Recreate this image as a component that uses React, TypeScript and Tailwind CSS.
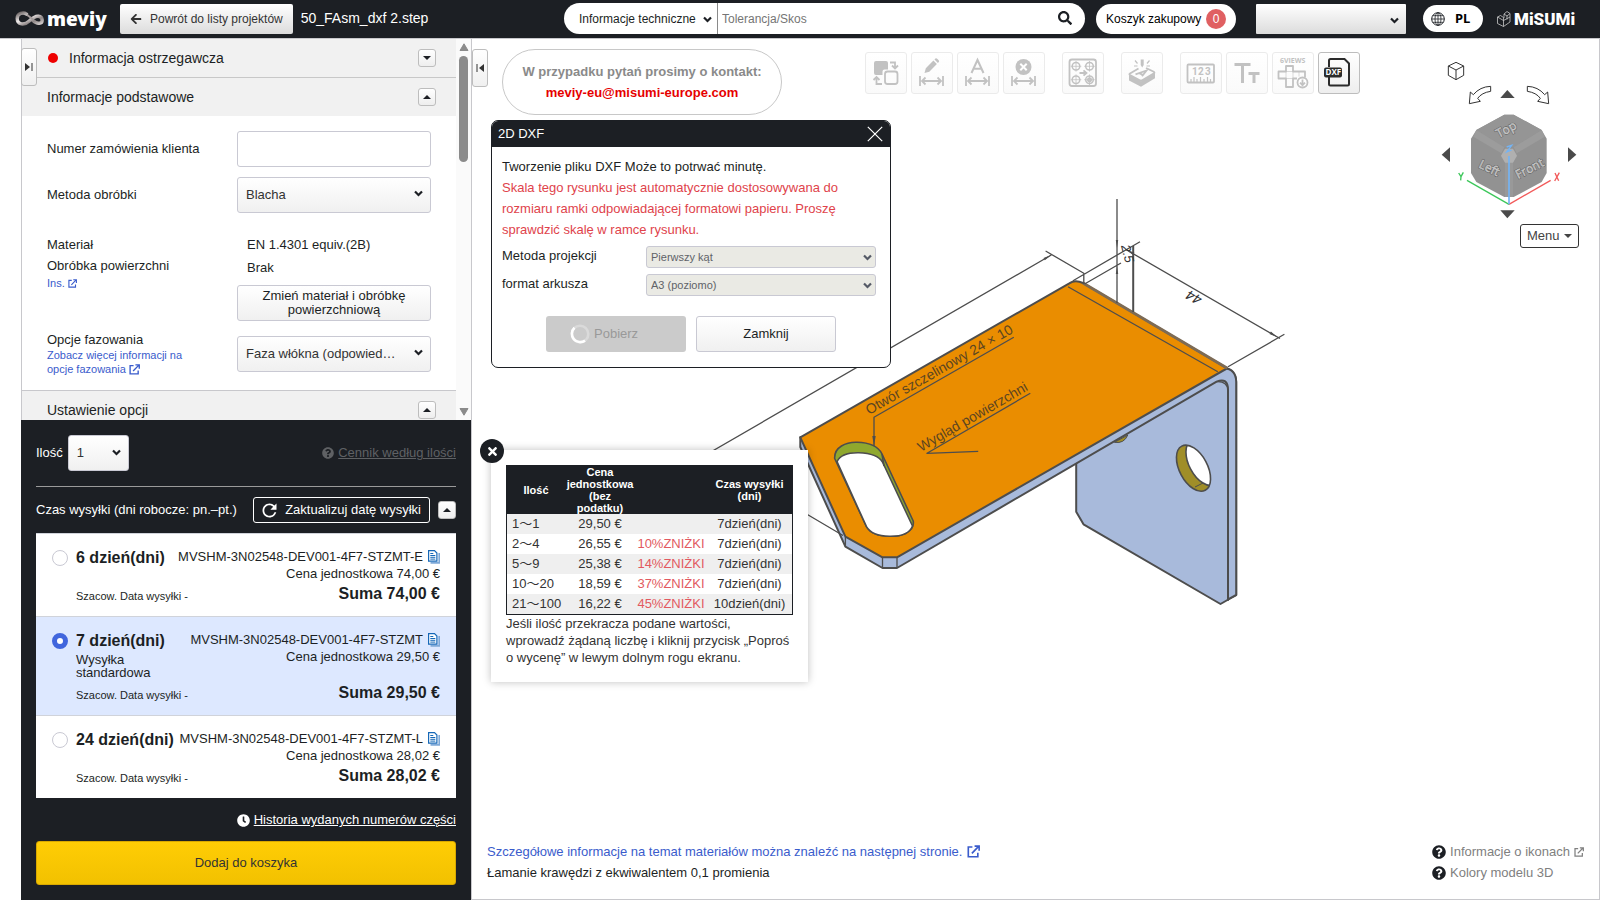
import type { ReactNode } from 'react';
import { FaArrowLeft, FaSearch, FaQuestionCircle, FaClock, FaTimes } from 'react-icons/fa';
import { MdRefresh } from 'react-icons/md';

const FIELD = 'rounded-[3px] border border-[#c9c9d3] bg-linear-to-b from-white to-[#f0f0f0]';

function Chevron({ className }: { className: string }) {
  return (
    <svg viewBox="0 0 9 7" className={`pointer-events-none absolute h-[7px] w-[9px] ${className}`} aria-hidden="true">
      <path d="M1 1.500 4.500 5 8 1.500" fill="none" stroke="currentColor" strokeWidth="2.200" />
    </svg>
  );
}

function ExternalIcon({ className }: { className: string }) {
  return (
    <svg viewBox="0 0 12 12" className={className} fill="none" stroke="currentColor" strokeWidth="1.500" aria-hidden="true">
      <path d="M5 1.800H1.200v9H10V7.200M4.500 7.700 10.500 1.500M7 1h4.200v4.200" />
    </svg>
  );
}

function Triangle({ up = false }: { up?: boolean }) {
  return (
    <svg viewBox="0 0 8 4" className="h-[4px] w-[8px]" aria-hidden="true">
      <path d={up ? 'M0 4 4 0 8 4z' : 'M0 0 4 4 8 0z'} fill="currentColor" />
    </svg>
  );
}

function Toggle({ up = false, label }: { up?: boolean; label: string }) {
  return (
    <button aria-label={label} className="flex h-[18px] w-[18px] items-center justify-center rounded-[3px] border border-[#bdbdbd] bg-linear-to-b from-white to-[#eeeeee] text-[#1c1f24]">
      <Triangle up={up} />
    </button>
  );
}

function MeviyLogo() {
  return (
    <a href="#home" aria-label="meviy" className="flex w-[91px] items-center text-white">
      <svg viewBox="0 0 30 16" className="h-[16px] w-[30px] shrink-0" aria-hidden="true">
        <defs>
          <linearGradient id="loop" x1="0" y1="0" x2="1" y2="1">
            <stop offset="0" stopColor="#6d6666" />
            <stop offset=".4" stopColor="#f1ecec" />
            <stop offset=".7" stopColor="#8c8484" />
            <stop offset="1" stopColor="#d8d2d2" />
          </linearGradient>
        </defs>
        <path d="M11.500 3.200C8.500 1 2.200 2 2.200 7.500c0 6.500 7.300 7 11.800 2.800C17.500 7 20 4.800 23.500 5.300c4.500.6 5 6.600.6 7-3 .3-4.800-1.500-6.600-3.300" fill="none" stroke="url(#loop)" strokeWidth="3.400" strokeLinecap="round" />
        <path d="M12.500 4.200 17.500 8" fill="none" stroke="#a39b9b" strokeWidth="2" strokeLinecap="round" />
      </svg>
      <span className="ml-[2px] font-['Noto_Sans',sans-serif] text-[19px] leading-[24px] font-black">meviy</span>
    </a>
  );
}

function Header() {
  return (
    <header className="flex h-[39px] shrink-0 items-start border-b border-[#c8c8cc] bg-[#1c1f24] pt-[3px]">
      <div className="flex h-[31px] items-center pl-[15px]">
        <MeviyLogo />
        <button className="ml-[14px] flex h-[30px] items-center gap-[8px] rounded-[2px] bg-linear-to-b from-white to-[#dcdcdc] px-[10px] text-[12px] whitespace-nowrap text-[#333]">
          <FaArrowLeft className="h-[12px] w-[12px]" />
          Powrót do listy projektów
        </button>
        <span className="ml-[8px] text-[14px] whitespace-nowrap text-white">50_FAsm_dxf 2.step</span>
      </div>
      <div className="ml-auto flex h-[31px] items-center pr-[28px]">
        <div className="flex h-[31px] w-[521px] overflow-hidden rounded-full bg-white">
          <div className="relative w-[154px] shrink-0 border-r border-[#8a8a8a]">
            <select aria-label="Zakres wyszukiwania" className="h-full w-full appearance-none pl-[15px] text-[12px] text-[#1c1f24]">
              <option>Informacje techniczne</option>
            </select>
            <Chevron className="top-[13px] right-[5px]" />
          </div>
          <input aria-label="Szukaj" placeholder="Tolerancja/Skos" className="min-w-0 flex-1 pl-[4px] text-[12px] outline-none placeholder:text-[#757575]" />
          <button aria-label="Szukaj" className="mr-[13px] pb-[2px] text-[#1c1f24]">
            <FaSearch className="h-[14px] w-[14px]" />
          </button>
        </div>
        <button className="ml-[11px] flex h-[30px] w-[140px] items-center justify-between rounded-full bg-white pr-[10px] pl-[10px] text-[12px] text-black">
          Koszyk zakupowy
          <span className="flex h-[20px] w-[20px] items-center justify-center rounded-full bg-[#e06062] text-white">0</span>
        </button>
        <div className="relative ml-[20px]">
          <select aria-label="Konto" className="h-[30px] w-[150px] appearance-none rounded-[1px] bg-linear-to-b from-white to-[#dcdcdc]">
            <option></option>
          </select>
          <Chevron className="top-[13px] right-[7px]" />
        </div>
        <button className="ml-[17px] flex h-[27px] w-[60px] items-center rounded-full bg-white pl-[8px] font-['Noto_Sans',sans-serif] text-[13px] font-bold text-black">
          <svg viewBox="0 0 14 14" className="mr-[10px] h-[14px] w-[14px]" fill="none" stroke="#1c1f24" aria-hidden="true">
            <circle cx="7" cy="7" r="6.300" />
            <ellipse cx="7" cy="7" rx="3" ry="6.300" strokeWidth=".8" />
            <path d="M7 .7v12.600M.7 7h12.600M1.700 3.700h10.600M1.700 10.300h10.600" strokeWidth=".8" />
          </svg>
          PL
        </button>
        <a href="#misumi" aria-label="MiSUMi" className="ml-[14px] flex w-[75px] items-center text-white">
          <svg viewBox="0 0 14 16" className="mr-[3px] h-[16px] w-[14px] shrink-0" fill="none" stroke="#c9c9c9" strokeWidth=".8" aria-hidden="true">
            <path d="M.5 6 3.500 4.500 6.500 6.500 6.500 15.500 .5 12.500zM.5 6 6.500 9.500M7 3 10 .5 13 2.500 13 11 6.500 15.500M7 3v4M7 3 10 5 13 2.500M10 5v3.500M6.500 9.500 13 6" />
          </svg>
          <span className="font-['Roboto',sans-serif] text-[17px] leading-[24px] font-black">MiSUMi</span>
        </a>
      </div>
    </header>
  );
}

function SelectField({ id, value }: { id: string; value: string }) {
  return (
    <div className="relative text-[#1c1f24]">
      <select id={id} className={`h-[36px] w-full appearance-none pl-[8px] text-[13px] text-[#333] ${FIELD}`}>
        <option>{value}</option>
      </select>
      <Chevron className="top-[13px] right-[8px]" />
    </div>
  );
}

function BasicForm() {
  return (
    <div className="px-[25px] pt-[15px] pb-[14px] text-[13px]">
      <div className="grid grid-cols-[1fr_194px] items-center gap-y-[10px]">
        <label htmlFor="order">Numer zamówienia klienta</label>
        <input id="order" className="h-[36px] rounded-[3px] border border-[#c9c9d3] px-2" />
        <label htmlFor="method">Metoda obróbki</label>
        <SelectField id="method" value="Blacha" />
      </div>
      <div className="mt-[20px] grid grid-cols-[1fr_194px]">
        <div className="pt-[1px] leading-[21px]">
          <div>Materiał</div>
          <div>Obróbka powierzchni</div>
          <a href="#ins" className="flex items-center gap-[3px] text-[11px] leading-[14px] text-[#3a5ccc]">
            Ins. <ExternalIcon className="h-[9px] w-[9px]" />
          </a>
        </div>
        <div>
          <div className="pl-[10px] leading-[23px]">
            <div>EN 1.4301 equiv.(2B)</div>
            <div>Brak</div>
          </div>
          <button className={`mt-[6px] h-[36px] w-full px-[20px] leading-[14px] ${FIELD}`}>Zmień materiał i obróbkę powierzchniową</button>
        </div>
      </div>
      <div className="mt-[11px] grid grid-cols-[1fr_194px]">
        <div>
          <label htmlFor="chamfer" className="block leading-[16px]">Opcje fazowania</label>
          <a href="#chamfer" className="block text-[11px] leading-[14px] text-[#3a5ccc]">
            Zobacz więcej informacji na
            <span className="flex items-center gap-[3px]">opcje fazowania <ExternalIcon className="h-[11px] w-[11px]" /></span>
          </a>
        </div>
        <div className="pt-[4px]">
          <SelectField id="chamfer" value="Faza włókna (odpowied…" />
        </div>
      </div>
    </div>
  );
}

type Option = { days: string; note?: boolean; part: string; price: string; checked?: boolean };
const OPTIONS: Option[] = [
  { days: '6', part: 'MVSHM-3N02548-DEV001-4F7-STZMT-E', price: '74,00' },
  { days: '7', part: 'MVSHM-3N02548-DEV001-4F7-STZMT', price: '29,50', note: true, checked: true },
  { days: '24', part: 'MVSHM-3N02548-DEV001-4F7-STZMT-L', price: '28,02' },
];

function CopyIcon() {
  return (
    <svg viewBox="0 0 12 14" className="h-[14px] w-[12px]" aria-hidden="true">
      <path d="M11.200 3v9.900H2.500" fill="none" stroke="#7fa9d8" strokeWidth="1.600" />
      <path d="M.6.6h5.900l2.400 2.400v8.100H.6z" fill="#fff" stroke="#1668b8" strokeWidth="1.200" />
      <path d="M2.300 3.500h3M2.300 5.500h5M2.300 7.300h5M2.300 9.100h5" stroke="#1668b8" />
    </svg>
  );
}

function DeliveryOption({ o }: { o: Option }) {
  return (
    <li className={`border-t border-[#d0d3da] ${o.checked ? 'bg-[#dde8ff]' : 'bg-white'}`}>
      <label className="flex px-[16px] pt-[14px] pb-[12px]">
        <input type="radio" name="delivery" defaultChecked={o.checked} className="mt-[2px] h-[16px] w-[16px] shrink-0 appearance-none rounded-full border border-[#c9c9d3] bg-white checked:border-[5px] checked:border-[#4166dd]" />
        <span className="ml-[8px] flex w-[98px] shrink-0 flex-col whitespace-nowrap">
          <span className="text-[16px] leading-[20px] font-bold">{o.days} dzień(dni)</span>
          {o.note && <span className="mt-[2px] mb-[9px] text-[13px] leading-[13px]">Wysyłka<br />standardowa</span>}
          <span className="mt-auto mb-[1px] text-[11px] leading-[14px]">Szacow. Data wysyłki -</span>
        </span>
        <span className="ml-auto flex flex-col items-end text-[13px] leading-[17px] whitespace-nowrap">
          <span className="flex items-center gap-[5px]">{o.part}<CopyIcon /></span>
          <span>Cena jednostkowa {o.price} €</span>
          <span className="mt-auto pt-[2px] text-[16px] leading-[20px] font-bold">Suma {o.price} €</span>
        </span>
      </label>
    </li>
  );
}

function OrderPanel() {
  return (
    <section className="shrink-0 bg-[#1c1f24] px-[15px] py-[15px] text-[13px] text-white">
      <div className="flex items-center">
        <label htmlFor="qty">Ilość</label>
        <div className="relative ml-[5px] w-[61px] text-[#1c1f24]">
          <select id="qty" className={`h-[36px] w-full appearance-none pl-[8px] text-[#333] ${FIELD}`}>
            <option>1</option>
          </select>
          <Chevron className="top-[14px] right-[8px]" />
        </div>
        <a href="#pricing" className="ml-auto flex items-center gap-[4px] text-[#5f6164]">
          <FaQuestionCircle className="h-[12px] w-[12px]" />
          <span className="underline">Cennik według ilości</span>
        </a>
      </div>
      <hr className="mt-[15px] border-[#9a9a9a]" />
      <div className="mt-[10px] flex items-center">
        <span className="whitespace-nowrap">Czas wysyłki (dni robocze: pn.–pt.)</span>
        <button className="ml-auto flex h-[26px] items-center gap-[5px] rounded-[3px] border border-white pr-[8px] pl-[5px] whitespace-nowrap">
          <MdRefresh className="h-[21px] w-[21px]" stroke="currentColor" />
          Zaktualizuj datę wysyłki
        </button>
        <div className="ml-[8px]"><Toggle up label="Zwiń czas wysyłki" /></div>
      </div>
      <ul className="mt-[10px] text-[#1c1f24]">
        {OPTIONS.map((o) => <DeliveryOption key={o.days} o={o} />)}
      </ul>
      <a href="#history" className="mt-[12px] flex items-center justify-end gap-[4px] leading-[20px]">
        <FaClock className="h-[13px] w-[13px]" />
        <span className="underline">Historia wydanych numerów części</span>
      </a>
      <button className="mt-[11px] h-[44px] w-full rounded-[3px] border border-[#d9a800] bg-linear-to-b from-[#ffcd05] to-[#f2c100] text-[#333]">Dodaj do koszyka</button>
    </section>
  );
}

function Sidebar() {
  return (
    <aside className="relative ml-[21px] flex w-[451px] shrink-0 flex-col border-r border-[#c8c8cc]">
      <div className="flex min-h-0 flex-1 border-l border-[#c8c8cc]">
        <div className="min-w-0 flex-1 overflow-hidden">
          <div className="flex h-[39px] items-center border-b border-[#c8c8c8] bg-[#f1f1f1] pr-[20px] pl-[26px] text-[14px]">
            <span className="mr-[11px] h-[10px] w-[10px] rounded-full bg-[#ee0000]" />
            <h2 className="flex-1">Informacja ostrzegawcza</h2>
            <Toggle label="Rozwiń informacje ostrzegawcze" />
          </div>
          <div className="flex h-[38px] items-center bg-[#f1f1f1] pr-[20px] pl-[25px] text-[14px]">
            <h2 className="flex-1">Informacje podstawowe</h2>
            <Toggle up label="Zwiń informacje podstawowe" />
          </div>
          <BasicForm />
          <div className="flex h-[39px] items-center border-t border-[#c8c8cc] bg-[#f1f1f1] pr-[20px] pl-[25px] text-[14px]">
            <h2 className="flex-1">Ustawienie opcji</h2>
            <Toggle up label="Zwiń ustawienia opcji" />
          </div>
        </div>
        <div className="flex w-[15px] flex-col items-center bg-[#fafafa] py-[4px] text-[#8b8b8b]" aria-hidden="true">
          <svg viewBox="0 0 10 8" className="h-[8px] w-[10px]"><path d="M1 7.500 5 .8 9 7.500z" fill="currentColor" stroke="currentColor" strokeLinejoin="round" /></svg>
          <span className="mt-[5px] h-[106px] w-[9px] rounded-full bg-[#8b8b8b]" />
          <svg viewBox="0 0 10 8" className="mt-auto h-[8px] w-[10px]"><path d="M1 .5 5 7.200 9 .5z" fill="currentColor" stroke="currentColor" strokeLinejoin="round" /></svg>
        </div>
      </div>
      <OrderPanel />
      <button aria-label="Zwiń panel" className="absolute top-[9px] left-0 flex h-[38px] w-[16px] items-center justify-center rounded-[3px] border border-[#bdbdbd] bg-linear-to-b from-white to-[#f0f0f0]">
        <svg viewBox="0 0 8 8" className="h-[8px] w-[8px]" aria-hidden="true"><path d="M0 0 5 4 0 8z" fill="#333" /><path d="M7 0v8" stroke="#333" /></svg>
      </button>
    </aside>
  );
}

function ToolButton({ label, active = false, className = '', children }: { label: string; active?: boolean; className?: string; children: ReactNode }) {
  return (
    <button aria-label={label} className={`h-[42px] w-[42px] shrink-0 rounded-[3px] border bg-linear-to-b from-white ${active ? 'border-[#bdbdbd] to-[#eeeeee]' : 'border-[#ebebeb] to-[#fafafa]'} ${className}`}>
      <svg viewBox="1 1 40 40" className={`h-[40px] w-[40px] ${active ? 'text-[#2b2b2b]' : 'text-[#c2c2c2]'}`} fill="none" stroke="currentColor" strokeWidth="1.800" aria-hidden="true">
        {children}
      </svg>
    </button>
  );
}

const SPAN = <path d="M9 24v10M32 24v10M11 29h19M14.500 25.500 11 29l3.500 3.500M26.500 25.500 30 29l-3.500 3.500" />;

function Toolbar() {
  return (
    <div className="mt-[13px] ml-[83px] flex gap-[4px]">
      <ToolButton label="Zamień">
        <path d="M11 9h10q2 0 2 2v6.500h-3.500q-2 0-2 2V23H11q-2 0-2-2V11q0-2 2-2z" fill="currentColor" stroke="none" />
        <rect x="20" y="19.500" width="12.500" height="12.500" rx="2.500" />
        <path d="M25 10.500h5v6M27 13.500l3 3 3-3M8.500 28l3-3 3 3M11.500 25v7h5.500" />
      </ToolButton>
      <ToolButton label="Edytuj wymiar">
        <path d="m13.500 21 1.300-4.800 7.600-7.600 3.500 3.500-7.600 7.600zM23.500 7.500l.9-.9q.9-.6 1.800.2l1.500 1.500q.8.900.1 1.800l-.9.900z" fill="currentColor" stroke="none" />
        {SPAN}
      </ToolButton>
      <ToolButton label="Wymiar automatyczny">
        <path d="M14.500 21 20.500 8l6 13M16.500 16.800h8" strokeWidth="2" />
        {SPAN}
      </ToolButton>
      <ToolButton label="Usuń wymiar">
        <circle cx="20.500" cy="15" r="8" fill="currentColor" stroke="none" />
        <path d="m17.300 11.800 6.400 6.400m0-6.400-6.400 6.400" stroke="#fff" strokeWidth="2" />
        {SPAN}
      </ToolButton>
      <ToolButton label="Zamiana otworów" className="ml-[13px]">
        <rect x="7.500" y="7.500" width="26.500" height="26.500" rx="2.500" />
        {[[14, 14.3], [27.5, 14.3], [14, 27.7], [27.5, 27.7]].map(([x, y]) => (
          <g key={`${x}-${y}`} strokeWidth="1.500">
            <circle cx={x} cy={y} r="3.800" />
            <path d={`M${x - 5.3} ${y}h10.600M${x} ${y - 5.3}v10.600`} strokeWidth=".8" />
          </g>
        ))}
        <circle cx="27.500" cy="27.700" r="1.600" />
        <path d="M17.500 21h6M21.500 18.300l3 2.700-3 2.700" />
      </ToolButton>
      <ToolButton label="Grawerowanie" className="ml-[13px]">
        <path d="M19.700 7.500h3v5.500l-1.500 2.500-1.500-2.500z" fill="currentColor" stroke="none" />
        <path d="m14 8.500 2.500 3M28.500 8.500l-2.500 3M13 14h3.500M29 14h-3.500" strokeWidth="1.200" />
        <path d="M17.500 16.500 9 21.500q-1.200.8 0 1.600l9.800 5.100q1.200.6 2.400 0L33 21.300q1-.8-.2-1.500L25 16" />
        <path d="m8 23 12 6.200L34 21v5.200L20 34.800 8 28.500z" fill="currentColor" stroke="none" />
        <path d="m14.500 22.300 11-3.800-4.500 5.700M18.300 21.200l3.500 1.700" />
      </ToolButton>
      <ToolButton label="Wymiary liczbowe" className="ml-[13px]">
        <rect x="7.500" y="12.500" width="26.500" height="18" rx="1" />
        <path d="M11 30v-3M14 30v-5M17 30v-3M20.500 30v-5M24 30v-3M27.500 30v-5M30.500 30v-3" strokeWidth="1.200" />
        <g fontSize="10" fill="currentColor" stroke="none" className="font-['Roboto',sans-serif] font-bold">
          <text x="12" y="23">1</text>
          <text x="18" y="23">2</text>
          <text x="25" y="23">3</text>
        </g>
      </ToolButton>
      <ToolButton label="Rozmiar tekstu">
        <path d="M8.500 12.500h16M16.500 12.500v18.500M22.500 21.500h11M28 21.500v9.500" strokeWidth="3" />
      </ToolButton>
      <ToolButton label="Sześć widoków">
        <text x="8" y="11" fontSize="7" fill="currentColor" stroke="none" className="font-['Open_Sans',sans-serif] font-bold">6VIEWS</text>
        <path d="M33 25.500V19.500H21V14h-7v5.500H6.500v7H14v8.500h7v-8.500h4" strokeLinejoin="round" />
        <path d="M14 19.500h7v7h-7zM27 19.500v5" strokeWidth=".6" />
        <circle cx="30.500" cy="30.500" r="5" fill="#fff" />
        <path d="M30.500 27.500v5.500M28 30.700l2.500 2.500 2.500-2.500" />
      </ToolButton>
      <ToolButton label="2D DXF" active>
        <path d="M11 15V8.500q0-1.500 1.500-1.500H26.500l4.500 4.500V32q0 1.500-1.500 1.500h-17q-1.500 0-1.500-1.500v-7" strokeWidth="2" />
        <rect x="6" y="15.500" width="18" height="10" rx="2" fill="currentColor" stroke="none" />
        <text x="7.500" y="23.300" fontSize="8" fill="#fff" stroke="none" className="font-['Open_Sans',sans-serif] font-bold">DXF</text>
      </ToolButton>
    </div>
  );
}

function ViewNav() {
  return (
    <div className="mt-[11px] ml-auto flex w-[179px] shrink-0 flex-col items-end pr-[20px]">
      <svg viewBox="0 0 540 522" className="-mr-[21px] h-[174px] w-[180px]" role="img" aria-label="Kostka widoku">
        <g fill="none" stroke="#333" strokeWidth="3" strokeLinejoin="round">
          <path d="M108 37 131 48V76L108 89 85 76V48zM85 48 108 60 131 48M108 60V89" />
          <path d="M212 109V124Q185 128 173 145L181 154 148 161 151 126 160 134Q180 110 212 109z" />
          <path d="M322 109V124Q349 128 361 145L353 154 386 161 383 126 374 134Q354 110 322 109z" />
        </g>
        <g fill="#4a4a4a">
          <path d="M262 120 284 144H241z" />
          <path d="M262 505 284 481H241z" />
          <path d="M65 314 90 292V336z" />
          <path d="M469 314 444 292V336z" />
        </g>
        <path d="M253 194H281L365 240 380 266V369L365 396 281 441H253L169 396 153 369V266L169 240z" fill="#929292" />
        <path d="M169 240 253 194H281L365 240 281 292H253z" fill="#959595" />
        <path d="M169 240 253 292 244 310 160 260zM365 240 281 292 290 310 374 260z" fill="#9c9c9c" />
        <path d="M255 335H279V441H255z" fill="#999999" />
        <path d="M255 296H279L291 317 279 338H255L243 317z" fill="#b0b0b0" />
        <g fill="#a2a2a2" stroke="#d0d0d0" strokeWidth="1.500" fontSize="36" className="font-['Open_Sans',sans-serif]">
          <g stroke="#666" strokeWidth="5">
            <text transform="translate(236 264) rotate(-28)">Top</text>
            <text transform="translate(174 351) rotate(26)">Left</text>
            <text transform="translate(294 387) rotate(-27)">Front</text>
          </g>
          <text transform="translate(236 264) rotate(-28)">Top</text>
          <text transform="translate(174 351) rotate(26)">Left</text>
          <text transform="translate(294 387) rotate(-27)">Front</text>
        </g>
        <path d="M141 391 267 463" stroke="#3cc75a" strokeWidth="4" />
        <path d="M392 391 267 463" stroke="#f25a5a" strokeWidth="4" />
        <path d="M267 318V463" stroke="#74b4f5" strokeWidth="5" />
        <g fill="none" strokeWidth="4">
          <path d="M116 369 123 380 130 367M123 380 122 391" stroke="#3cc75a" />
          <path d="M405 369 416 392M418 368 404 393" stroke="#f25a5a" />
          <path d="M260 291 275 286 260 306 275 300" stroke="#74b4f5" />
        </g>
      </svg>
      <button className="flex h-[24px] w-[59px] items-center justify-between rounded-[3px] border border-[#333] bg-white px-[6px] text-[13px] text-[#444]">
        Menu <Triangle />
      </button>
    </div>
  );
}

function Model() {
  const edge = '#4d4d4d';
  return (
    <svg viewBox="0 0 600 430" className="absolute top-[151px] left-[228px] h-[430px] w-[600px]" role="img" aria-label="Model 3D" strokeLinejoin="round">
      <defs>
        <clipPath id="bore"><ellipse cx="493.500" cy="278.200" rx="14" ry="25" transform="rotate(-28 493.500 278.200)" /></clipPath>
      </defs>
      <g stroke={edge} strokeWidth="2">
        <path d="M376.200 270V321.700L383.500 334.300 520.500 414 536.200 405V191.700Q535.500 180 524 178.300L500 190z" fill="#a8badb" />
        <path d="M100.300 247.300V257L145.400 356.700 182.500 378H197L516.600 191.700Q528 187 528 200V409.300L536.200 405V191.700Q536 179 524 178z" fill="#a8badb" />
        <path d="M100.300 247.300 369.300 93.300Q375 89.500 383 93L527.300 178.300 522.400 181 197 367.300H182.500L145.400 346.700z" fill="#ea8d00" />
      </g>
      <path d="M383 93 527.300 178.300" stroke="#7d6b55" strokeWidth="3" />
      <path d="M368 96.700 517.800 181.700M182.500 367.300V378M197 367.300V378M145.400 346.700V356.700M516.600 191.700Q527 191 528 200" fill="none" stroke={edge} strokeWidth="1.300" />
      <path d="M528 200V411" stroke={edge} strokeWidth="1.500" />
      <path d="M414.500 252.300Q424 254 427.800 245z" fill="#a08e28" stroke={edge} />
      <g stroke={edge} strokeWidth="1.600">
        <path d="M134.700 268.500C134 257 146 252 157 252.300C168 252.500 178 256 182 264L213.200 331C215 341 202 346.500 189.400 346.300C177 346 170 343 166.500 336.700z" fill="#8fa82e" />
        <path d="M137 271.700C140 265 149 262.500 158.800 262.700C169 263 179 266 182.500 272L212.500 336C210 343 201 346.500 189.400 346.300C177 346 170 343 166.500 336.700z" fill="#fff" />
        <path d="M182 264 184 276" fill="none" />
      </g>
      <ellipse cx="493.500" cy="278.200" rx="14" ry="25" transform="rotate(-28 493.500 278.200)" fill="#a08e28" />
      <g clipPath="url(#bore)">
        <ellipse cx="503" cy="272.500" rx="14" ry="25" transform="rotate(-28 503 272.500)" fill="#fff" stroke={edge} strokeWidth="1.600" />
      </g>
      <path d="M495 297 503 293" stroke={edge} />
      <ellipse cx="493.500" cy="278.200" rx="14" ry="25" transform="rotate(-28 493.500 278.200)" fill="none" stroke={edge} strokeWidth="1.600" />
      <g fill="none" stroke={edge} strokeWidth="1.300">
        <path d="M0 268.200 351.300 65M345.600 61 383.800 83.300V94M373 90.700 440 51.700M384.600 94 421 73M417 9V113M426.700 60 580 148.500M528 176.700 584.400 144.300M104 322.500 143 345.500" />
        <path d="M433.200 56V122" strokeWidth="2" />
        <path d="M174 256V227.300L313.800 147.300M330.300 203.300 227 263.300 278.200 261.300" />
      </g>
      <path d="M174 256 172.300 246H175.700zM351.300 65 343.500 68 344.800 70.300zM426.700 60 433 65 434.300 62.600zM577 147 569.500 144 570.900 141.600zM417 58 415.800 50H418.200zM417 76 415.800 84H418.200z" fill={edge} />
      <g fill="#5c4520" className="font-['Liberation_Sans',sans-serif]">
        <text fontSize="14" transform="translate(169 225) rotate(-29.700)">Otwór szczelinowy 24 × 10</text>
        <text fontSize="14" transform="translate(221 262) rotate(-30)">Wygląd powierzchni</text>
      </g>
      <g fill="#333" className="font-['Liberation_Sans',sans-serif] italic">
        <text fontSize="14" transform="translate(503 107) rotate(208)">44</text>
        <text fontSize="13" transform="translate(421 56) rotate(75)">2.5</text>
      </g>
    </svg>
  );
}

function DialogSelect({ id, value }: { id: string; value: string }) {
  return (
    <div className="relative text-[#555a66]">
      <select id={id} disabled className="h-[22px] w-full appearance-none rounded-[3px] border border-[#c9c9d3] bg-[#eaeae4] pl-[4px] text-[11px] text-[#5f6368] opacity-100">
        <option>{value}</option>
      </select>
      <Chevron className="top-[8px] right-[4px]" />
    </div>
  );
}

function DxfDialog() {
  return (
    <section role="dialog" aria-label="2D DXF" className="absolute top-[81px] left-[19px] w-[400px] overflow-hidden rounded-[7px] border border-[#1c1f24] bg-white text-[13px]">
      <div className="flex h-[26px] items-center justify-between bg-[#1c1f24] pr-[7px] pl-[6px] text-white">
        <h2>2D DXF</h2>
        <button aria-label="Zamknij okno">
          <svg viewBox="0 0 16 16" className="h-[16px] w-[16px]" aria-hidden="true"><path d="m.8.8 14.400 14.400m0-14.400L.8 15.200" stroke="#fff" strokeWidth="1.200" /></svg>
        </button>
      </div>
      <div className="px-[10px] pt-[9px] pb-[15px]">
        <p className="leading-[21px]">Tworzenie pliku DXF Może to potrwać minutę.</p>
        <p className="pr-[30px] leading-[21px] text-[#e0434b]">Skala tego rysunku jest automatycznie dostosowywana do rozmiaru ramki odpowiadającej formatowi papieru. Proszę sprawdzić skalę w ramce rysunku.</p>
        <div className="mt-[6px] grid grid-cols-[144px_230px] gap-y-[6px] leading-[20px]">
          <label htmlFor="projection">Metoda projekcji</label>
          <DialogSelect id="projection" value="Pierwszy kąt" />
          <label htmlFor="sheet">format arkusza</label>
          <DialogSelect id="sheet" value="A3 (poziomo)" />
        </div>
        <div className="mt-[20px] flex justify-center gap-[10px]">
          <button disabled className="flex h-[36px] w-[140px] items-center gap-[4px] rounded-[3px] bg-[#cbcbcb] pl-[24px] text-[#999]">
            <svg viewBox="0 0 20 20" className="h-[20px] w-[20px]" fill="none" strokeWidth="2.600" aria-hidden="true">
              <circle cx="10" cy="10" r="8.300" stroke="#dadada" />
              <path d="M4.500 3.800A8.300 8.300 0 0 0 15 16.600" stroke="#fff" />
            </svg>
            Pobierz
          </button>
          <button className={`h-[36px] w-[140px] ${FIELD}`}>Zamknij</button>
        </div>
      </div>
    </section>
  );
}

const PRICES = [
  ['1～1', '29,50 €', '', '7dzień(dni)'],
  ['2～4', '26,55 €', '10%ZNIŻKI', '7dzień(dni)'],
  ['5～9', '25,38 €', '14%ZNIŻKI', '7dzień(dni)'],
  ['10～20', '18,59 €', '37%ZNIŻKI', '7dzień(dni)'],
  ['21～100', '16,22 €', '45%ZNIŻKI', '10dzień(dni)'],
];

function PricePopup() {
  return (
    <section className="absolute top-[411px] left-[19px] w-[317px] bg-white px-[15px] pt-[15px] pb-[16px] text-[13px] text-[#333] shadow-[0_0_8px_rgba(0,0,0,0.25)]">
      <button aria-label="Zamknij cennik" className="absolute -top-[11px] -left-[11px] flex h-[24px] w-[24px] items-center justify-center rounded-full bg-[#1c1f24] text-white">
        <FaTimes className="h-[13px] w-[13px]" />
      </button>
      <table className="w-full table-fixed border-separate border-spacing-0 border border-[#1c1f24] text-center">
        <colgroup>
          <col className="w-[58px]" /><col className="w-[70px]" /><col className="w-[72px]" /><col />
        </colgroup>
        <thead className="bg-[#1c1f24] text-[11px] leading-[12px] text-white">
          <tr>
            <th>Ilość</th>
            <th>Cena jednostkowa (bez<br />podatku)</th>
            <th></th>
            <th>Czas wysyłki (dni)</th>
          </tr>
        </thead>
        <tbody>
          {PRICES.map(([qty, price, off, days]) => (
            <tr key={qty} className="h-[20px] leading-[20px] whitespace-nowrap odd:bg-[#efefef]">
              <td className="pl-[5px] text-left leading-[18px]">{qty}</td>
              <td>{price}</td>
              <td className="text-[#e25a60]">{off}</td>
              <td>{days}</td>
            </tr>
          ))}
        </tbody>
      </table>
      <p className="leading-[17px]">Jeśli ilość przekracza podane wartości,<br />wprowadź żądaną liczbę i kliknij przycisk „Poproś o wycenę” w lewym dolnym rogu ekranu.</p>
    </section>
  );
}

function Viewer() {
  return (
    <main className="relative flex min-w-0 flex-1 flex-col border-r border-b border-[#c8c8cc] bg-white">
      <Model />
      <div className="flex items-start">
        <button aria-label="Pokaż panel" className="mt-[10px] flex h-[38px] w-[16px] shrink-0 items-center justify-center rounded-[3px] border border-[#bdbdbd] bg-linear-to-b from-white to-[#f0f0f0]">
          <svg viewBox="0 0 8 8" className="h-[8px] w-[8px]" aria-hidden="true"><path d="M8 0 3 4l5 4z" fill="#333" /><path d="M1 0v8" stroke="#333" /></svg>
        </button>
        <div className="mt-[10px] ml-[14px] flex h-[66px] w-[280px] shrink-0 flex-col items-center justify-center rounded-full border border-[#c8c8c8] text-[13px] leading-[21px] font-bold whitespace-nowrap text-[#8a8a8a]">
          <span>W przypadku pytań prosimy o kontakt:</span>
          <a href="mailto:meviy-eu@misumi-europe.com" className="text-[#e60000]">meviy-eu@misumi-europe.com</a>
        </div>
        <Toolbar />
        <ViewNav />
      </div>
      <footer className="mt-auto flex justify-between pr-[15px] pb-[16px] pl-[15px] text-[13px] leading-[21px]">
        <div>
          <a href="#materials" className="flex items-center gap-[5px] text-[#3a5ccc]">
            Szczegółowe informacje na temat materiałów można znaleźć na następnej stronie. <ExternalIcon className="h-[13px] w-[13px]" />
          </a>
          <p>Łamanie krawędzi z ekwiwalentem 0,1 promienia</p>
        </div>
        <div className="text-[#808080]">
          <a href="#icons" className="flex items-center gap-[4px]">
            <FaQuestionCircle className="h-[14px] w-[14px] text-[#1c1f24]" />
            Informacje o ikonach <ExternalIcon className="h-[10px] w-[10px]" />
          </a>
          <a href="#colors" className="flex items-center gap-[4px]">
            <FaQuestionCircle className="h-[14px] w-[14px] text-[#1c1f24]" />
            Kolory modelu 3D
          </a>
        </div>
      </footer>
      <DxfDialog />
      <PricePopup />
    </main>
  );
}

export default function App() {
  return (
    <div className="flex h-screen flex-col bg-white font-['Liberation_Sans','Noto_Sans_CJK_JP',Arial,sans-serif] text-[#1c1f24]">
      <Header />
      <div className="flex min-h-0 flex-1">
        <Sidebar />
        <Viewer />
      </div>
    </div>
  );
}
